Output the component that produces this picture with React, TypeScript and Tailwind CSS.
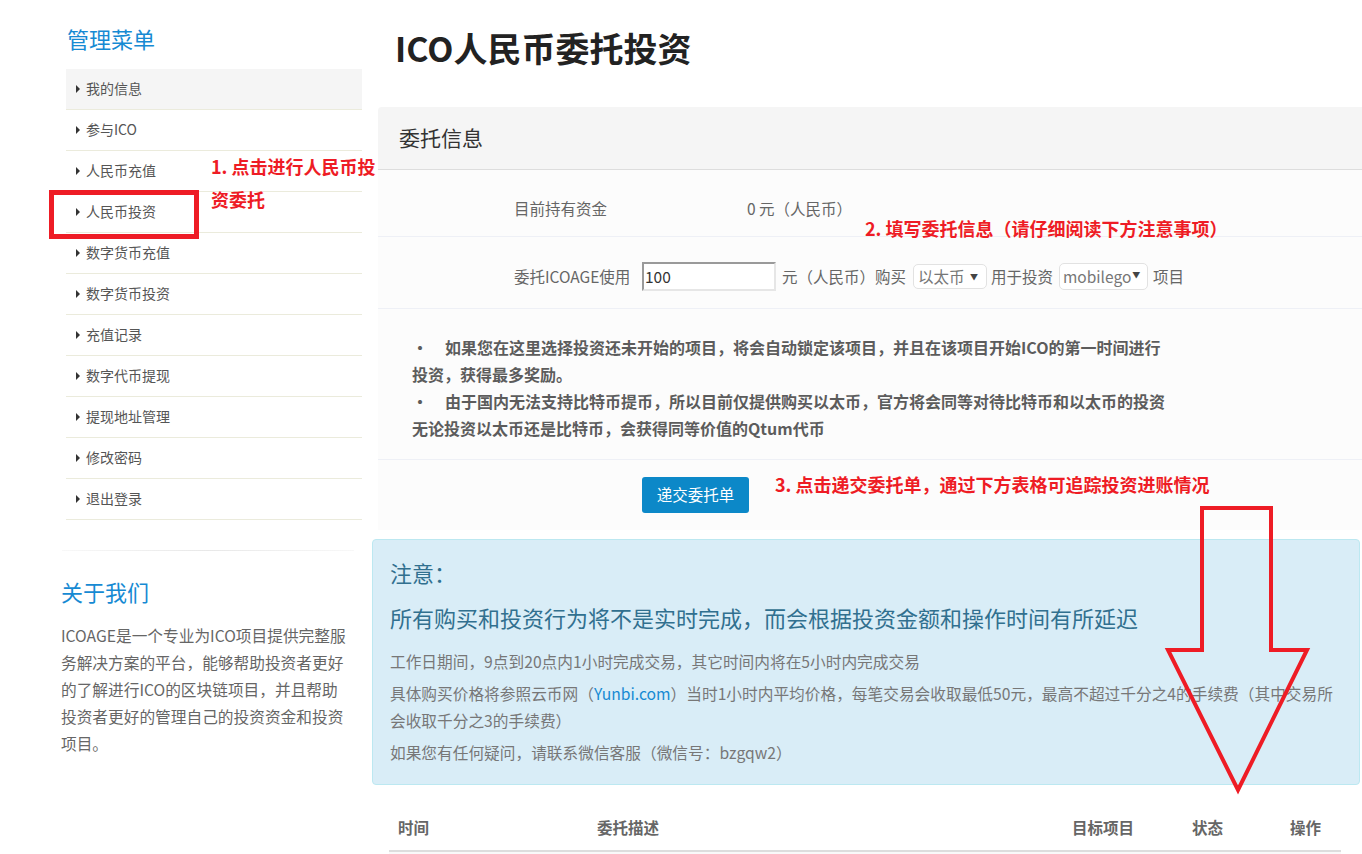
import React from 'react';

const menu = ['我的信息', '参与ICO', '人民币充值', '人民币投资', '数字货币充值', '数字货币投资', '充值记录', '数字代币提现', '提现地址管理', '修改密码', '退出登录'];

const about = [
  'ICOAGE是一个专业为ICO项目提供完整服',
  '务解决方案的平台，能够帮助投资者更好',
  '的了解进行ICO的区块链项目，并且帮助',
  '投资者更好的管理自己的投资资金和投资',
  '项目。',
];

export default function App() {
  return (
    <div className="relative h-[854px] w-[1362px] overflow-hidden bg-white font-['Noto_Sans_CJK_SC','Noto_Sans',sans-serif]">
      <div className="flex">
        {/* Sidebar */}
        <aside className="ml-[61px] w-[301px] shrink-0 pt-[25px]">
          <h2 className="ml-[6px] text-[22px] leading-[26px] text-[#168ad3]">管理菜单</h2>
          <ul className="ml-[5px] mt-[18px] w-[296px]">
            {menu.map((m, i) => (
              <li
                key={m}
                className={`flex h-[41px] items-center border-b border-[#ebebdc] pb-[1px] pl-[10px] text-[14px] text-[#555] ${i === 0 ? 'bg-[#f5f5f5]' : ''}`}
              >
                <span className="mr-[6px] h-0 w-0 border-y-[4px] border-l-[4px] border-y-transparent border-l-[#333]" />
                {m}
              </li>
            ))}
          </ul>
          <div className="ml-[1px] mt-[30px] h-px w-[292px] bg-linear-to-r from-[#f8f8f8] via-[#e8e8e8] to-[#f8f8f8]" />
          <h2 className="mt-[27px] text-[22px] leading-[26px] text-[#168ad3]">关于我们</h2>
          <p className="mt-[18px] text-[15.7px] leading-[27px] text-[#666]">
            {about.map((l) => (
              <span key={l} className="block whitespace-nowrap">{l}</span>
            ))}
          </p>
        </aside>

        {/* Main */}
        <main className="ml-[10px] w-[990px] shrink-0">
          <h1 className="mt-[28px] pl-[23px] text-[34px] font-bold leading-[40px] text-[#222]">ICO人民币委托投资</h1>

          <section className="ml-[6px] mt-[39px] rounded-tl-[4px] bg-[#fcfcfc]">
            <div className="flex h-[63px] items-center rounded-tl-[4px] border-b border-[#dddddd] bg-[#f5f5f5] pl-[21px] text-[21px] text-[#333]">
              委托信息
            </div>
            <div className="flex h-[67px] items-start border-b border-[#eef0f6] pl-[136px] pt-[27px] text-[15.5px] leading-[22px] text-[#666]">
              <span className="w-[233px]">目前持有资金</span>
              <span>0 元（人民币）</span>
            </div>
            <div className="flex h-[72px] items-center border-b border-[#eef0f6] pb-[17px] pl-[136px] pt-[25px] text-[15.5px] text-[#666]">
              <span className="w-[128px] whitespace-nowrap">委托ICOAGE使用</span>
              <div className="flex h-[29px] w-[134px] items-center border-2 border-b-[#e6e6e6] border-l-[#9a9a9a] border-r-[#e6e6e6] border-t-[#9a9a9a] bg-white pl-[1px] text-[15.5px] text-[#333]">
                100
              </div>
              <span className="ml-[6px] w-[131px] whitespace-nowrap">元（人民币）购买</span>
              <div className="flex h-[25px] w-[74px] items-center rounded-[5px] border border-[#e2e2e2] bg-white pl-[4px] text-[#777]">
                以太币
                <span className="ml-auto mr-[8px] text-[8px] leading-none text-[#444]">▼</span>
              </div>
              <span className="ml-[4px] w-[68px] whitespace-nowrap">用于投资</span>
              <div className="flex h-[27px] w-[89px] items-center rounded-[5px] border border-[#e2e2e2] bg-white pl-[3px] text-[#777]">
                mobilego
                <span className="ml-[1px] mt-[-4px] text-[8px] leading-none text-[#444]">▼</span>
              </div>
              <span className="ml-[5px]">项目</span>
            </div>
            <div className="h-[151px] border-b border-[#eef0f6] pl-[34px] pt-[25px] text-[16px] font-bold leading-[27px] text-[#5c5c5c]">
              <span className="block whitespace-nowrap">
                <span className="inline-block w-[33px]">•</span>
                如果您在这里选择投资还未开始的项目，将会自动锁定该项目，并且在该项目开始ICO的第一时间进行
              </span>
              <span className="block whitespace-nowrap">投资，获得最多奖励。</span>
              <span className="block whitespace-nowrap">
                <span className="inline-block w-[33px]">•</span>
                由于国内无法支持比特币提币，所以目前仅提供购买以太币，官方将会同等对待比特币和以太币的投资
              </span>
              <span className="block whitespace-nowrap">无论投资以太币还是比特币，会获得同等价值的Qtum代币</span>
            </div>
            <div className="h-[70px] pl-[264px] pt-[17px]">
              <button className="h-[36px] w-[107px] rounded-[3px] bg-[#0c88c8] text-[15.5px] text-white">递交委托单</button>
            </div>
          </section>

          <div className="mr-[2px] mt-[9px] rounded-[4px] border border-[#bce8f1] bg-[#d9edf7] pb-[18px] pl-[17px] pr-[17px] pt-[19px]">
            <h3 className="text-[22px] leading-[26px] text-[#31708f]">注意：</h3>
            <h3 className="mt-[17px] text-[22px] leading-[30px] text-[#31708f]">所有购买和投资行为将不是实时完成，而会根据投资金额和操作时间有所延迟</h3>
            <p className="mt-[16px] text-[15.7px] leading-[27px] text-[#777]">工作日期间，9点到20点内1小时完成交易，其它时间内将在5小时内完成交易</p>
            <p className="mt-[5px] text-[15.7px] leading-[27px] text-[#777]">
              <span className="block whitespace-nowrap">
                具体购买价格将参照云币网（<span className="text-[#168ad3]">Yunbi.com</span>）当时1小时内平均价格，每笔交易会收取最低50元，最高不超过千分之4的手续费（其中交易所
              </span>
              <span className="block whitespace-nowrap">会收取千分之3的手续费）</span>
            </p>
            <p className="mt-[5px] text-[15.7px] leading-[27px] text-[#777]">如果您有任何疑问，请联系微信客服（微信号：bzgqw2）</p>
          </div>

          <div className="ml-[17px] mt-[21px] w-[952px]">
            <div className="grid h-[46px] grid-cols-[199px_475px_120px_98px_60px] items-center border-b-2 border-[#dddddd] text-[15.5px] font-bold text-[#666]">
              <span className="pl-[9px]">时间</span>
              <span className="pl-[9px]">委托描述</span>
              <span className="pl-[9px]">目标项目</span>
              <span className="pl-[9px]">状态</span>
              <span className="pl-[9px]">操作</span>
            </div>
            <div className="h-[40px] bg-[#f9f9f9]" />
          </div>
        </main>
      </div>

      {/* Annotations */}
      <div className="absolute left-[49px] top-[190px] h-[49px] w-[150px] border-[5px] border-[#ee1c25]" />
      <div className="absolute left-[211px] top-[150px] text-[18px] font-bold leading-[33px] text-[#ee1c25]">
        <span className="block whitespace-nowrap">1. 点击进行人民币投</span>
        <span className="block whitespace-nowrap">资委托</span>
      </div>
      <div className="absolute left-[865px] top-[216px] whitespace-nowrap text-[18px] font-bold leading-[24px] text-[#ee1c25]">
        2. 填写委托信息（请仔细阅读下方注意事项）
      </div>
      <div className="absolute left-[775px] top-[472px] whitespace-nowrap text-[18px] font-bold leading-[24px] text-[#ee1c25]">
        3. 点击递交委托单，通过下方表格可追踪投资进账情况
      </div>
      <svg className="pointer-events-none absolute left-0 top-0" width="1362" height="854" viewBox="0 0 1362 854">
        <polygon
          points="1202,508 1271,508 1271,650 1307,650 1238,790 1168,650 1202,650"
          fill="none"
          stroke="#ee1c25"
          strokeWidth="4"
        />
      </svg>
    </div>
  );
}
